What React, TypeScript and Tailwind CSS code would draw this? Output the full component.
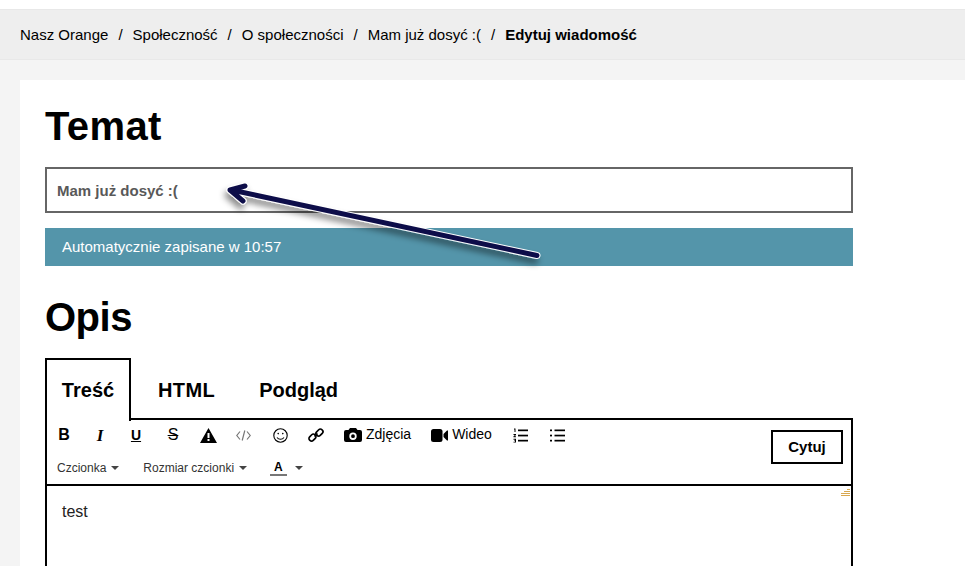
import React from "react";

function Btn({ children, w }: { children: React.ReactNode; w: string }) {
  return <div className={`flex h-5 items-center justify-center ${w}`}>{children}</div>;
}

const Caret = () => (
  <svg width="8" height="4" viewBox="0 0 8 4" className="ml-[5px]"><path d="M0 0h8L4 4z" fill="#444" /></svg>
);

const Camera = () => (
  <svg width="18" height="16" viewBox="0 0 18 16"><path fillRule="evenodd" fill="#000" d="M6 1h6l1.500 2H16a2 2 0 0 1 2 2v8a2 2 0 0 1-2 2H2a2 2 0 0 1-2-2V5a2 2 0 0 1 2-2h2.500zM9 5.500a3.700 3.700 0 1 0 0 7.400 3.700 3.700 0 0 0 0-7.400zM9 7.300a1.900 1.900 0 1 1 0 3.800 1.900 1.900 0 0 1 0-3.800z" /></svg>
);

const Video = () => (
  <svg width="17" height="13" viewBox="0 0 17 13"><rect x="0" y="0" width="11.500" height="13" rx="2.500" fill="#000" /><path d="M12.500 5 16 1.500h1v10h-1l-3.500-3.500z" fill="#000" /></svg>
);

const OrderedList = () => (
  <svg width="15" height="15" viewBox="0 0 15 15" fill="#000">
    <rect x="5" y="1.500" width="10" height="1.700" /><rect x="5" y="6.700" width="10" height="1.700" /><rect x="5" y="11.800" width="10" height="1.700" />
    <path d="M1 .5h1.500v3.500h-1V1.500H1zM.5 6h2.500v1L1.600 8.300H3v.9H.5v-1L2 6.900H.5zM.5 10.800H3v3.700H.5v-.8h1.500v-.6H1v-.7h1v-.7H.5z" />
  </svg>
);

const BulletList = () => (
  <svg width="15" height="15" viewBox="0 0 15 15" fill="#000">
    <rect x="4.500" y="1.500" width="10.500" height="1.700" /><rect x="4.500" y="6.700" width="10.500" height="1.700" /><rect x="4.500" y="11.800" width="10.500" height="1.700" />
    <rect x="0" y="1.500" width="2" height="1.700" /><rect x="0" y="6.700" width="2" height="1.700" /><rect x="0" y="11.800" width="2" height="1.700" />
  </svg>
);

const Warning = () => (
  <svg width="17" height="15" viewBox="0 0 17 15"><path fillRule="evenodd" fill="#000" d="M8.500 0 17 15H0zM7.500 5v5h2V5zM7.500 11v2h2v-2z" /></svg>
);

const Smile = () => (
  <svg width="15" height="15" viewBox="0 0 15 15" fill="none" stroke="#000" strokeWidth="1.100">
    <circle cx="7.500" cy="7.500" r="6.700" /><path d="M4 9.500c1.800 2.400 5.200 2.400 7 0" /><circle cx="5.200" cy="5.600" r=".8" fill="#000" stroke="none" /><circle cx="9.800" cy="5.600" r=".8" fill="#000" stroke="none" />
  </svg>
);

const Chain = () => (
  <svg width="16" height="16" viewBox="0 0 16 16" fill="none" stroke="#000" strokeWidth="1.700">
    <rect x="9" y="1.800" width="5" height="7.500" rx="2.300" transform="rotate(45 11.500 5.500)" /><rect x="2" y="6.800" width="5" height="7.500" rx="2.300" transform="rotate(45 4.500 10.500)" /><path d="M6.500 9.500l3-3" />
  </svg>
);

const Code = () => (
  <svg width="15" height="11" viewBox="0 0 15 11" fill="none" stroke="#777" strokeWidth="1.200">
    <path d="M4 1.500 .8 5.500 4 9.500M11 1.500l3.200 4-3.200 4M8.800.5 6.200 10.500" />
  </svg>
);

export default function App() {
  const crumbs = ["Nasz Orange", "Społeczność", "O społeczności", "Mam już dosyć :("];
  return (
    <div className="relative h-[566px] w-[965px] overflow-hidden bg-[#f4f4f4] font-['Liberation_Sans',Arial,sans-serif] text-black">
      <div className="h-[9px] bg-white" />
      <nav className="flex h-[51px] items-center border-y border-[#e8e8e8] bg-[#eeeeee] pl-5 pt-[1px] text-[15px]">
        {crumbs.map((c) => (
          <React.Fragment key={c}>
            <span>{c}</span>
            <span className="px-[10px]">/</span>
          </React.Fragment>
        ))}
        <span className="font-bold">Edytuj wiadomość</span>
      </nav>
      <main className="ml-5 mt-5 h-[600px] bg-white pl-[25px]">
        <div className="w-[808px]">
          <h1 className="pt-[20px] text-[40px] font-bold leading-[52px] tracking-[0.4px]">Temat</h1>
          <div className="mt-[15px] flex h-[46px] items-center border-2 border-[#666666] pl-[10px] pt-[2px] text-[15px] font-bold text-[#595959]">
            Mam już dosyć :(
          </div>
          <div className="mt-[15px] flex h-[38px] items-center bg-[#5495aa] pl-[17px] text-[15px] text-white">
            Automatycznie zapisane w 10:57
          </div>
          <h2 className="mt-[25px] text-[40px] font-bold leading-[52px] tracking-[-0.5px]">Opis</h2>
          <div className="mt-[15px] flex h-[61px] text-[20px] font-bold">
            <div className="relative z-10 flex h-[63px] w-[86px] items-center justify-center border-x-2 border-t-2 border-black bg-white pb-[1px]">Treść</div>
            <div className="flex items-center pl-[27px] pt-[2px] tracking-[0.4px]">HTML</div>
            <div className="flex items-center pl-[44px] pt-[2px]">Podgląd</div>
          </div>
          <div className="relative -mt-[1px] h-[200px] border-2 border-black">
            <div className="relative h-[66px] border-b-2 border-black">
              <div className="flex h-[28px] items-center pl-[7px] pt-[2px]">
                <Btn w="w-[20px]"><span className="text-[16px] font-bold leading-none">B</span></Btn>
                <Btn w="w-[20px] ml-[16px]"><span className="font-['Liberation_Serif',serif] text-[17px] font-bold italic leading-none">I</span></Btn>
                <Btn w="w-[20px] ml-[16px]"><span className="text-[14px] font-bold leading-none underline">U</span></Btn>
                <Btn w="w-[20px] ml-[17px]"><span className="text-[16px] leading-none line-through">S</span></Btn>
                <Btn w="w-[20px] ml-[15px]"><Warning /></Btn>
                <Btn w="w-[20px] ml-[15px]"><Code /></Btn>
                <Btn w="w-[20px] ml-[17px]"><Smile /></Btn>
                <Btn w="w-[20px] ml-[16px]"><Chain /></Btn>
                <div className="ml-[18px] flex h-5 items-center"><Camera /><span className="-mt-[3px] ml-[4px] text-[14px] leading-none">Zdjęcia</span></div>
                <div className="ml-[20px] flex h-5 items-center"><Video /><span className="-mt-[3px] ml-[4px] text-[14px] leading-none">Wideo</span></div>
                <Btn w="w-[15px] ml-[21px]"><OrderedList /></Btn>
                <Btn w="w-[15px] ml-[22px]"><BulletList /></Btn>
              </div>
              <div className="flex h-[36px] items-center pl-[10px] pt-[4px] text-[12px] text-[#333]">
                <span>Czcionka</span><Caret />
                <span className="ml-[24px]">Rozmiar czcionki</span><Caret />
                <span className="ml-[23px] border-b-2 border-[#777] px-[4px] text-[12px] font-bold leading-[13px] text-black">A</span>
                <span className="ml-[3px]"><Caret /></span>
              </div>
              <div className="absolute right-[8px] top-[10px] flex h-[34px] w-[72px] items-center justify-center border-2 border-black text-[15px] font-bold">Cytuj</div>
            </div>
            <div className="absolute right-[1px] top-[68px] flex w-[10px] flex-col items-end gap-[1px] pt-[1px]">
              <div className="h-px w-[3px] bg-[#d8a850]" />
              <div className="h-px w-[6px] bg-[#d8a850]" />
              <div className="h-px w-[9px] bg-[#d8a850]" />
              <div className="h-px w-[9px] bg-[#d8a850]" />
            </div>
            <div className="pl-[15px] pt-[16px] text-[16px] leading-[20px] text-[#222]">test</div>
          </div>
        </div>
      </main>
      <svg className="absolute left-[215px] top-[175px]" width="345" height="100" viewBox="215 175 345 100">
        <defs>
          <filter id="sh" x="-10%" y="-30%" width="120%" height="170%">
            <feDropShadow dx="-2" dy="5" stdDeviation="3" floodColor="#000" floodOpacity="0.45" />
          </filter>
        </defs>
        <g filter="url(#sh)" fill="none" strokeLinecap="round" strokeLinejoin="round">
          <path d="M537 255.500 234 190.500M245 186 230 190 243 201" stroke="#fff" strokeWidth="7" />
          <path d="M537 255.500 234 190.500M245 186 230 190 243 201" stroke="#0f0f4a" strokeWidth="5" />
        </g>
      </svg>
    </div>
  );
}
